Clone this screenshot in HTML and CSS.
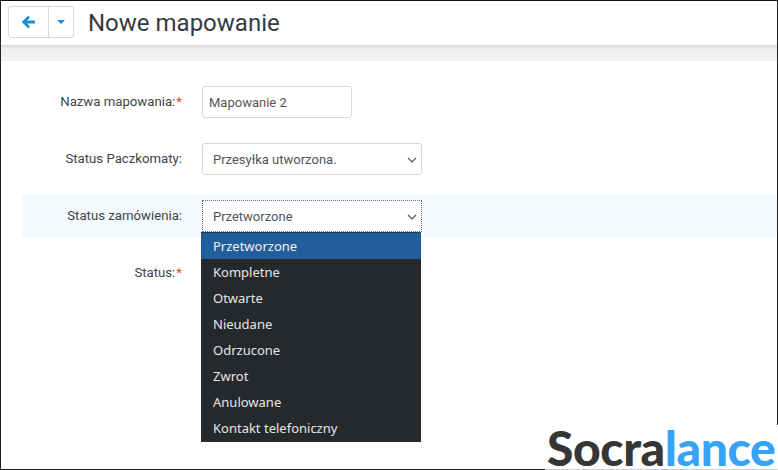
FILE: index.html
```html
<!DOCTYPE html>
<html lang="pl">
<head>
    <meta charset="UTF-8">
    <title>Nowe mapowanie</title>
    <link rel="stylesheet" href="styles.css">
</head>
<body>
    <div class="page">
        <header class="page-header">
            <div class="btn-group">
                <button class="btn-back" type="button">
                    <svg width="14" height="14" viewBox="0 0 14 14"><path d="M7 1.6 1.8 7 7 12.4M2.4 7H13" fill="none" stroke="#1a8fd1" stroke-width="2.8"/></svg>
                </button>
                <button class="btn-caret" type="button"><span class="caret"></span></button>
            </div>
            <h1>Nowe mapowanie</h1>
        </header>
        <div class="band"></div>

        <form class="form">
            <div class="row">
                <label class="label">Nazwa mapowania:<span class="req">*</span></label>
                <div class="field field-input">Mapowanie 2</div>
            </div>
            <div class="row">
                <label class="label">Status Paczkomaty:</label>
                <div class="field field-select">
                    Przesyłka utworzona.
                    <svg class="chevron" width="10" height="6" viewBox="0 0 10 6"><path d="M1 1l4 4 4-4" fill="none" stroke="#555" stroke-width="1.2"/></svg>
                </div>
            </div>
            <div class="row row-active">
                <label class="label">Status zamówienia:</label>
                <div class="select-wrap">
                    <div class="field field-select field-focus">
                        Przetworzone
                        <svg class="chevron" width="10" height="6" viewBox="0 0 10 6"><path d="M1 1l4 4 4-4" fill="none" stroke="#555" stroke-width="1.2"/></svg>
                    </div>
                    <ul class="dropdown">
                        <li class="selected">Przetworzone</li>
                        <li>Kompletne</li>
                        <li>Otwarte</li>
                        <li>Nieudane</li>
                        <li>Odrzucone</li>
                        <li>Zwrot</li>
                        <li>Anulowane</li>
                        <li>Kontakt telefoniczny</li>
                    </ul>
                </div>
            </div>
            <div class="row row-status">
                <label class="label">Status:<span class="req">*</span></label>
            </div>
        </form>
    </div>
    <div class="logo">Socra<span class="logo-blue">lance</span></div>
</body>
</html>
```

FILE: styles.css
```css
* {
    margin: 0;
    padding: 0;
    box-sizing: border-box;
}

html, body {
    height: 470px;
    overflow: hidden;
}

body {
    font-family: 'Roboto', sans-serif;
    background: #fff;
    color: #363a3f;
    position: relative;
}

.page {
    height: 470px;
    border-top: 1px solid #111;
    border-left: 1px solid #222;
    border-right: 1px solid #222;
    border-bottom: 1px solid #222;
}

.page-header {
    height: 44px;
    display: flex;
    align-items: center;
    padding-left: 7px;
    background: #fff;
    box-shadow: 0 1px 4px rgba(0, 0, 0, 0.18);
    position: relative;
}

.btn-group {
    display: flex;
    height: 32px;
    margin-bottom: 2px;
    border: 1px solid #d5d9de;
    border-radius: 3px;
    background: #fff;
}

.btn-group button {
    border: none;
    background: none;
    display: flex;
    align-items: center;
    justify-content: center;
}

.btn-back {
    width: 40px;
    border-right: 1px solid #d5d9de !important;
}

.btn-caret {
    width: 24px;
}

.caret {
    border-left: 4px solid transparent;
    border-right: 4px solid transparent;
    border-top: 4px solid #1a8fd1;
}

h1 {
    font-size: 24px;
    font-weight: 400;
    margin-left: 14px;
    color: #363a3f;
}

.band {
    height: 16px;
    background: #f0f1f3;
}

.form {
    padding: 25px 0 0 21px;
}

.row {
    display: flex;
    margin-bottom: 25px;
}

.label {
    width: 160px;
    height: 32px;
    font-size: 13.2px;
    line-height: 31px;
    text-align: right;
    color: #3f4347;
}

.req {
    color: #e2453c;
    margin-left: 1px;
}

.field {
    height: 32px;
    margin-left: 20px;
    background: #fff;
    border: 1px solid #d5d9de;
    border-radius: 3px;
    font-size: 13px;
    line-height: 32px;
    color: #555;
}

.field-input {
    width: 150px;
    padding-left: 6px;
}

.field-select {
    width: 220px;
    padding-left: 10px;
    position: relative;
    color: #50555a;
}

.chevron {
    position: absolute;
    right: 4px;
    top: 13px;
}

.row-active {
    height: 42px;
    margin-top: -5px;
    margin-bottom: 20px;
    margin-left: 0;
    padding-top: 5px;
    background: #f4f9fd;
}

.field-focus {
    border: 1px dotted #666;
    border-radius: 0;
}

.select-wrap {
    position: relative;
}

.dropdown {
    position: absolute;
    top: 32px;
    left: 19px;
    width: 220px;
    list-style: none;
    border-top: 1px solid #1b3a5e;
    background: #26292c;
    color: #e6e6e6;
    font-family: 'Noto Sans', sans-serif;
    font-size: 13px;
    padding-bottom: 1px;
    z-index: 5;
}

.dropdown li {
    height: 26px;
    line-height: 27px;
    padding-left: 12px;
}

.dropdown .selected {
    background: #225d9c;
    color: #f2f2f2;
}

.logo {
    position: absolute;
    right: 0;
    bottom: 0;
    width: 233px;
    height: 45px;
    padding-left: 2px;
    background: #fff;
    border-bottom: 1px solid #ccc;
    font-family: 'Lato', sans-serif;
    font-weight: 900;
    font-size: 48px;
    line-height: 45px;
    letter-spacing: -0.4px;
    color: #363636;
    white-space: nowrap;
    z-index: 6;
}

.logo-blue {
    color: #36a3f7;
}
```
